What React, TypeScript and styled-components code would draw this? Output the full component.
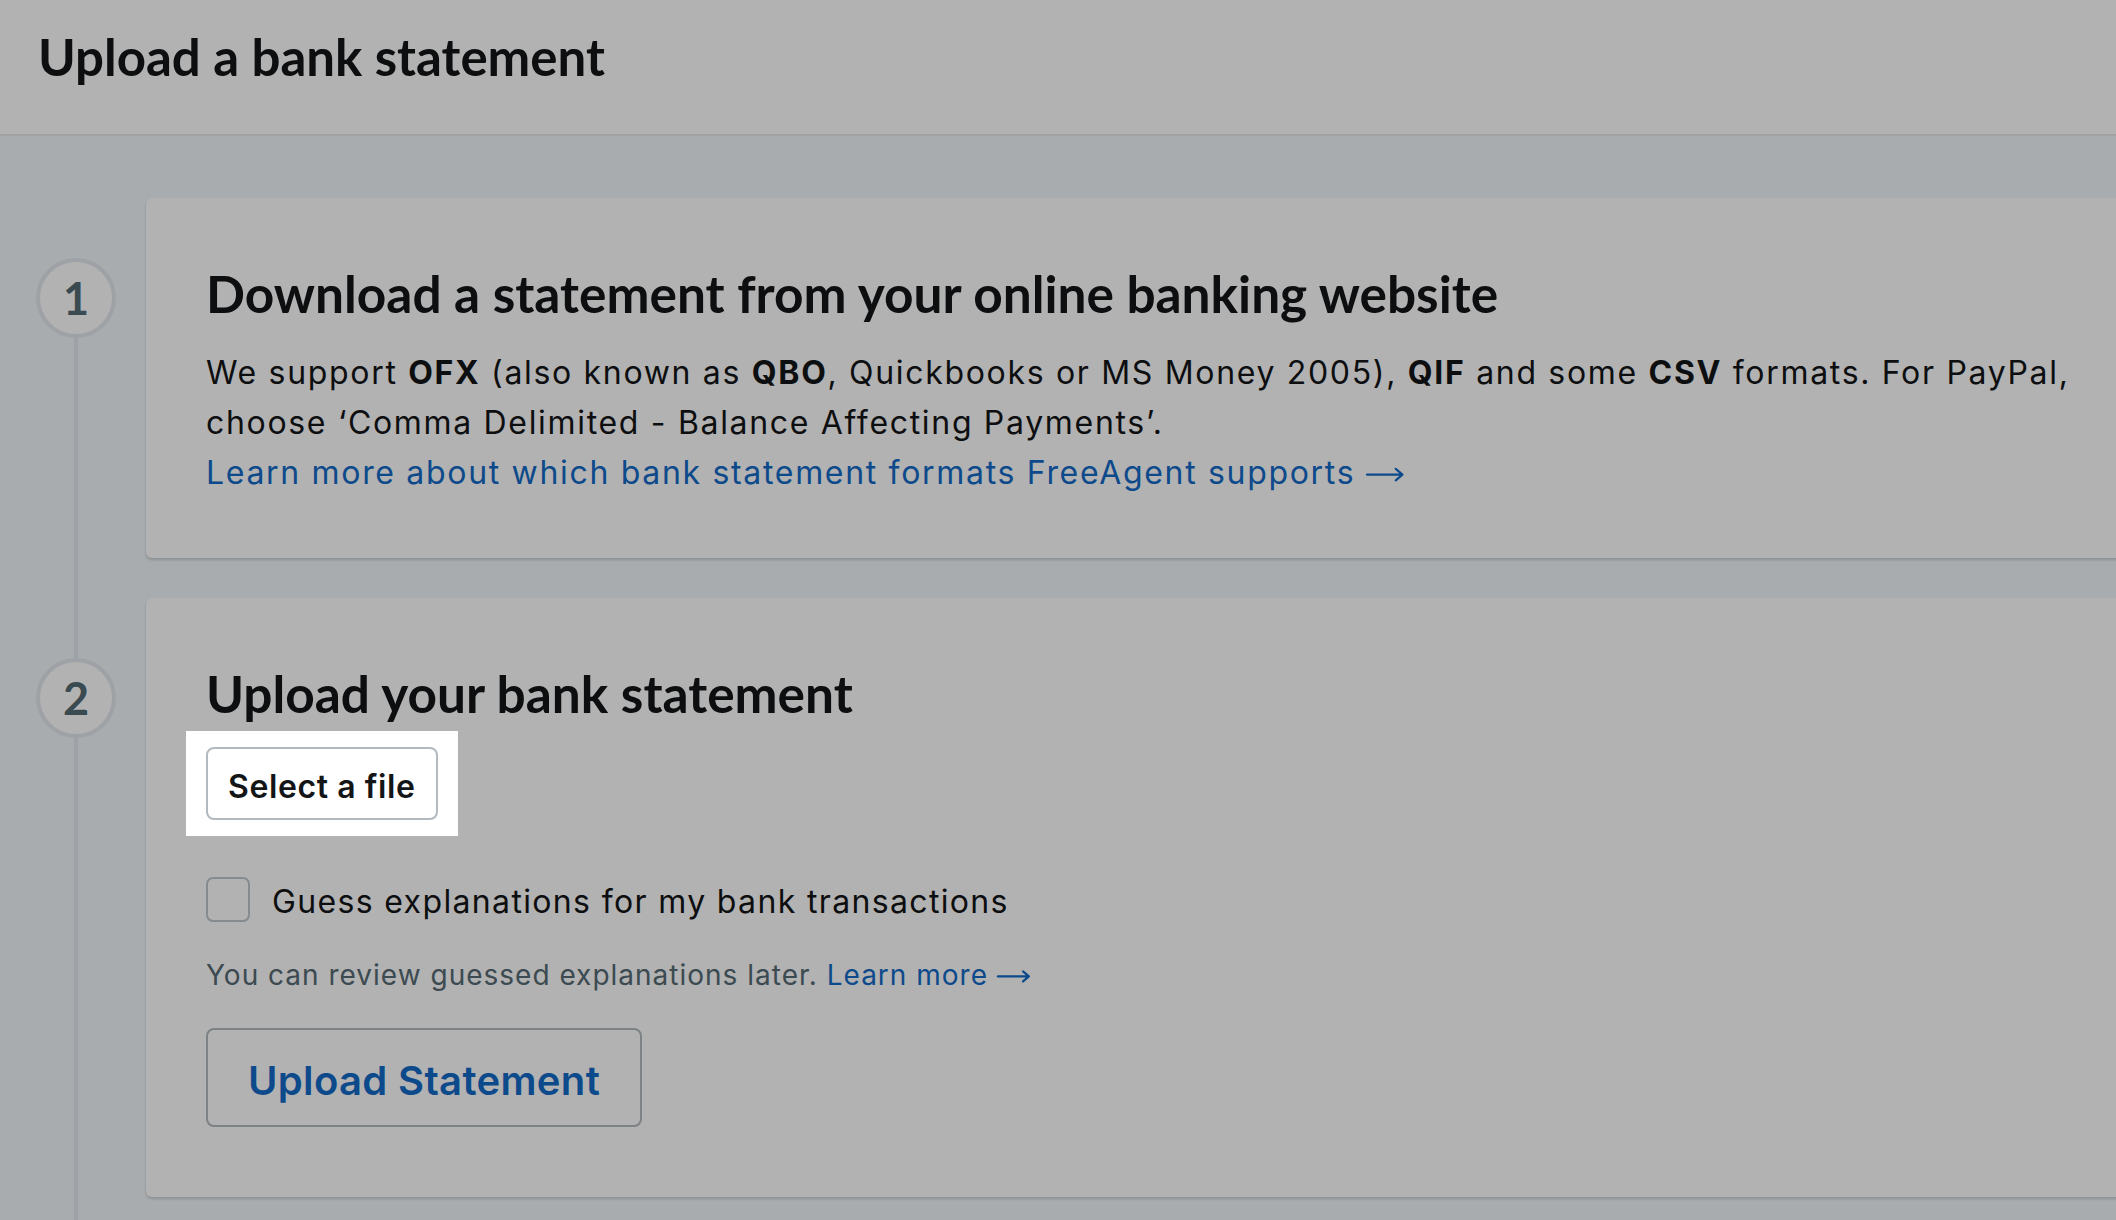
import React from "react";
import styled, { createGlobalStyle } from "styled-components";

const GlobalStyle = createGlobalStyle`
  html, body {
    margin: 0;
    padding: 0;
    overflow: hidden;
    background: #f1f7fb;
  }
  body {
    font-family: Inter, "Liberation Sans", sans-serif;
    color: #131517;
    -webkit-font-smoothing: antialiased;
  }
  * { box-sizing: border-box; }
`;

const headingFont = `Lato, "Liberation Sans", sans-serif`;
const bodyFont = `Inter, "Liberation Sans", sans-serif`;

const Header = styled.header`
  height: 136px;
  background: #ffffff;
  border-bottom: 2px solid #e5e8eb;
  padding: 27px 38px 0;
`;

const Title = styled.h1`
  margin: 0;
  font-family: ${headingFont};
  font-size: 51px;
  line-height: 60px;
  font-weight: 700;
  color: #131517;
`;

const Main = styled.main`
  min-height: calc(100vh - 136px);
  display: flex;
  flex-direction: column;
  padding-top: 62px;
  margin-right: -160px;
`;

const StepRow = styled.section<{ $grow?: boolean }>`
  display: grid;
  grid-template-columns: 116px 1fr;
  column-gap: 30px;
  flex: ${(p) => (p.$grow ? 1 : "none")};
`;

const Rail = styled.div`
  display: flex;
  flex-direction: column;
  align-items: center;
  padding-left: 36px;
`;

const Seg = styled.div<{ $hidden?: boolean; $grow?: boolean }>`
  width: 4px;
  height: ${(p) => (p.$grow ? "auto" : "60px")};
  flex: ${(p) => (p.$grow ? 1 : "none")};
  background: ${(p) => (p.$hidden ? "transparent" : "#e3e7ec")};
`;

const Circle = styled.div`
  width: 80px;
  height: 80px;
  flex: none;
  border-radius: 50%;
  border: 4px solid #e3e7ec;
  background: #ffffff;
  display: flex;
  align-items: center;
  justify-content: center;
  font-family: ${headingFont};
  font-size: 45px;
  font-weight: 700;
  color: #536a75;
  line-height: 1;
`;

const Card = styled.div<{ $pb: number }>`
  align-self: start;
  margin-bottom: 40px;
  background: #ffffff;
  border-radius: 6px;
  box-shadow: 0 2px 3px rgba(0, 0, 0, 0.16), 0 0 1px rgba(0, 0, 0, 0.08);
  padding: 66px 60px ${(p) => p.$pb}px;
  display: flex;
  flex-direction: column;
  align-items: flex-start;
`;

const StepHeading = styled.h2`
  margin: 0;
  font-family: ${headingFont};
  font-size: 51.4px;
  line-height: 58px;
  font-weight: 700;
  color: #131517;
`;

const Paragraph = styled.p`
  margin: 26px 0 0;
  font-family: ${bodyFont};
  font-size: 32px;
  line-height: 50px;
  letter-spacing: 1.68px;
  color: #131517;

  b {
    font-weight: 700;
  }
`;

const TextLink = styled.a`
  color: #136ac7;
  text-decoration: none;
  white-space: nowrap;
`;

const Arrow = styled.svg`
  display: inline-block;
  width: 1.2em;
  height: 0.6em;
  vertical-align: baseline;
  overflow: visible;
`;

const ArrowIcon = () => (
  <Arrow viewBox="0 0 40 20" aria-hidden="true">
    <path
      d="M1 10 H38 M31 4 L38 10 L31 16"
      fill="none"
      stroke="currentColor"
      strokeWidth={2.2}
      strokeLinecap="round"
      strokeLinejoin="round"
      vectorEffect="non-scaling-stroke"
    />
  </Arrow>
);

const Spotlight = styled.div`
  position: relative;
  z-index: 5;
  margin: 9px -20px 0;
  padding: 16px 20px;
  background: #ffffff;
  box-shadow: 0 0 0 5000px rgba(0, 0, 0, 0.3);
`;

const Button = styled.button<{ $variant: "plain" | "primary" }>`
  display: inline-flex;
  align-items: center;
  justify-content: center;
  height: ${(p) => (p.$variant === "plain" ? 73 : 99)}px;
  padding: 5px ${(p) => (p.$variant === "plain" ? 20 : 40)}px 0;
  border: 2px solid #b3babf;
  border-radius: 8px;
  background: #ffffff;
  font-family: ${bodyFont};
  font-size: ${(p) => (p.$variant === "plain" ? 32 : 40)}px;
  letter-spacing: ${(p) => (p.$variant === "plain" ? 0.6 : 0.35)}px;
  font-weight: 600;
  color: ${(p) => (p.$variant === "plain" ? "#131517" : "#136ac7")};
  cursor: pointer;
`;

const CheckRow = styled.label`
  margin-top: 40px;
  display: flex;
  align-items: center;
  gap: 22px;
  font-family: ${bodyFont};
  font-size: 32px;
  letter-spacing: 1.35px;
  color: #131517;
  cursor: pointer;
`;

const CheckText = styled.span`
  line-height: 40px;
  padding-top: 6px;
`;

const CheckBox = styled.input`
  appearance: none;
  -webkit-appearance: none;
  margin: 0;
  width: 44px;
  height: 45px;
  border: 2px solid #bfc7cc;
  border-radius: 7px;
  background: #ffffff;
`;

const Helper = styled.p`
  margin: 33px 0 0;
  font-family: ${bodyFont};
  font-size: 28px;
  line-height: 40px;
  letter-spacing: 1px;
  color: #566a74;
`;

const UploadWrap = styled.div`
  margin-top: 33px;
`;

export default function App() {
  return (
    <>
      <GlobalStyle />
      <Header>
        <Title>Upload a bank statement</Title>
      </Header>
      <Main>
        <StepRow>
          <Rail>
            <Seg $hidden />
            <Circle>1</Circle>
            <Seg $grow />
          </Rail>
          <Card $pb={60}>
            <StepHeading>Download a statement from your online banking website</StepHeading>
            <Paragraph>
              We support <b>OFX</b> (also known as <b>QBO</b>, Quickbooks or MS Money 2005),{" "}
              <b>QIF</b> and some <b>CSV</b> formats. For PayPal,
              <br />
              choose ‘Comma Delimited - Balance Affecting Payments’.
              <br />
              <TextLink href="#">
                Learn more about which bank statement formats FreeAgent supports <ArrowIcon />
              </TextLink>
            </Paragraph>
          </Card>
        </StepRow>
        <StepRow $grow>
          <Rail>
            <Seg />
            <Circle>2</Circle>
            <Seg $grow />
          </Rail>
          <Card $pb={70}>
            <StepHeading>Upload your bank statement</StepHeading>
            <Spotlight>
              <Button $variant="plain">Select a file</Button>
            </Spotlight>
            <CheckRow>
              <CheckBox type="checkbox" />
              <CheckText>Guess explanations for my bank transactions</CheckText>
            </CheckRow>
            <Helper>
              You can review guessed explanations later.{" "}
              <TextLink href="#">
                Learn more <ArrowIcon />
              </TextLink>
            </Helper>
            <UploadWrap>
              <Button $variant="primary">Upload Statement</Button>
            </UploadWrap>
          </Card>
        </StepRow>
      </Main>
    </>
  );
}
